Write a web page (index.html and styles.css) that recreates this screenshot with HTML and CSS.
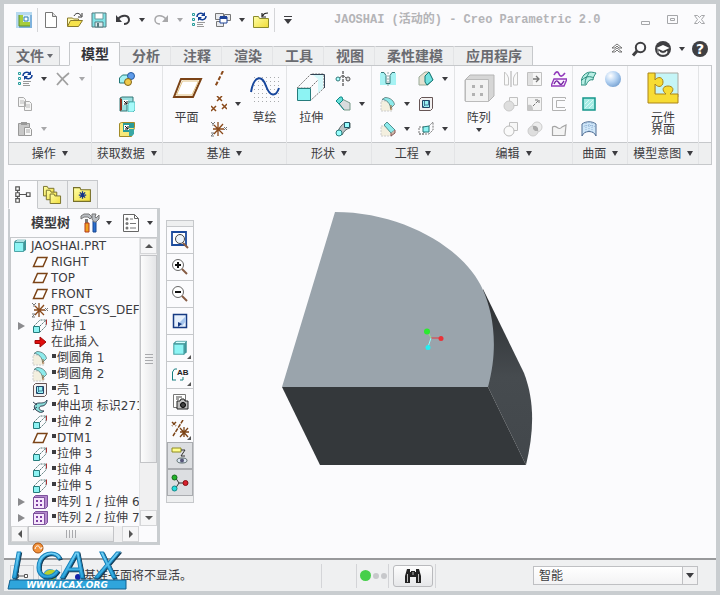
FILE: index.html
```html
<!DOCTYPE html>
<html lang="zh-CN">
<head>
<meta charset="utf-8">
<title>JAOSHAI (活动的) - Creo Parametric 2.0</title>
<link rel="stylesheet" href="styles.css">
</head>
<body>
<svg class="defs" aria-hidden="true">
  <defs>
    <linearGradient id="g-yellow" x1="0" y1="0" x2="1" y2="1"><stop offset="0" stop-color="#ffffa8"/><stop offset="1" stop-color="#f0dc38"/></linearGradient>
    <linearGradient id="g-side" x1="0" y1="0" x2="0" y2="1"><stop offset="0" stop-color="#2b2e31"/><stop offset=".5" stop-color="#464b4f"/><stop offset="1" stop-color="#42474b"/></linearGradient>
    <radialGradient id="g-ball" cx=".35" cy=".3" r=".8"><stop offset="0" stop-color="#fff"/><stop offset=".5" stop-color="#b4d2f2"/><stop offset="1" stop-color="#6f9bcd"/></radialGradient>
    <linearGradient id="g-logo" x1="0" y1="0" x2="0" y2="1"><stop offset="0" stop-color="#8be0ff"/><stop offset="1" stop-color="#0f93d2"/></linearGradient>
    <pattern id="p-dots" width="4" height="4" patternUnits="userSpaceOnUse"><rect width="1" height="1" x="1" y="1" fill="#a9abad"/></pattern>
  </defs>
  <symbol id="i-app" viewBox="0 0 16 16"><rect width="16" height="16" fill="#7fb2dc"/><path d="M0 0h16v3H3v13H0z" fill="#b6d9ef"/><path d="M3 3h4v7h7v4H3z" fill="#a7cc3c"/><path d="M7 3h7v7H7z" fill="#d5ecf8"/><path d="M8 5h4v4H8z" fill="#fff" stroke="#2d7fb0"/><path d="M3 3v11h11" fill="none" stroke="#5d8e2b"/></symbol>
  <symbol id="i-new" viewBox="0 0 16 16"><path d="M2.500 .5h7l4 4v11h-11z" fill="#fff" stroke="#777"/><path d="M9.500 .5v4h4" fill="#ddd" stroke="#777"/></symbol>
  <symbol id="i-open" viewBox="0 0 16 16"><path d="M.5 14V6h5l1 1h5v2" fill="#fffcb0" stroke="#8a7a2c"/><path d="M.5 14.500l3-6h12l-4 6z" fill="#f6e24c" stroke="#8a7a2c"/><path d="M7 4c2-4 6-3 7 0m1-3v4h-4" fill="none" stroke="#333"/></symbol>
  <symbol id="i-save" viewBox="0 0 16 16"><path d="M1 1h14v14H1z" fill="#7fe3e6" stroke="#55797e"/><path d="M4 1h8v6H4z" fill="#fff" stroke="#6b9a9d"/><path d="M4 10h8v5H4z" fill="#dcecee" stroke="#55797e"/><path d="M6 11h2v4H6z" fill="#55797e"/></symbol>
  <symbol id="i-undo" viewBox="0 0 16 16"><path d="M3 7c4-5 11-4 11 1 0 3-3 4-5 4" fill="none" stroke="currentColor" stroke-width="2"/><path d="M1 3v7h6z" fill="currentColor"/></symbol>
  <symbol id="i-redo" viewBox="0 0 16 16"><path d="M13 7C9 2 2 3 2 8c0 3 3 4 5 4" fill="none" stroke="currentColor" stroke-width="1.500"/><path d="M15 3v7H9z" fill="currentColor"/></symbol>
  <symbol id="i-regen" viewBox="0 0 16 16"><path d="M1.500 1.500h2v2h-2zM1.500 6.500h2v2h-2zM1.500 11.500h2v2h-2z" fill="#dff" stroke="#2b9b9b"/><path d="M6 10.500h8M6 12.500h6M6 14.500h7" stroke="#999"/><path d="M6 5c0-4 5-5 7-2M15 4c0 4-5 5-7 2" fill="none" stroke="#123f96" stroke-width="1.500"/><path d="M14 0v4h-4zM7 9V5h4z" fill="#123f96"/></symbol>
  <symbol id="i-win" viewBox="0 0 16 16"><path d="M.5 1.500h8v6h-8zM9.500 2.500h6v6h-6zM1.500 9.500h7v5h-7z" fill="#e8eaee" stroke="#777"/><path d="M5 5h7v6H5z" fill="#fff" stroke="#1d4298"/><path d="M5 4h7v3H5z" fill="#1d4298"/></symbol>
  <symbol id="i-close" viewBox="0 0 16 16"><path d="M.5 4.500h5l1 2h9v9H.5z" fill="url(#g-yellow)" stroke="#8a8a2c"/><path d="M10 4c0-2 2-3 5-3M9 1v4h4" fill="none" stroke="#222" stroke-width="1.200"/></symbol>
  <symbol id="i-x" viewBox="0 0 16 16"><path d="M2 2l11 12M14 2C10 5 6 9 2 14" fill="none" stroke="#a0a0a0" stroke-width="1.800"/></symbol>
  <symbol id="i-copy" viewBox="0 0 16 16"><path d="M1.500 1.500h5l2 2v7h-7zM7.500 5.500h5l2 2v7h-7z" fill="#f5f5f5" stroke="#aaa"/><path d="M3 5h4M3 7h4M9 9h4M9 11h4" stroke="#bbb"/></symbol>
  <symbol id="i-paste" viewBox="0 0 16 16"><path d="M1.500 2.500h11v12h-11z" fill="#c8c8c8" stroke="#999"/><path d="M4 1h6v3H4z" fill="#999"/><path d="M7.500 6.500h5l2 2v6h-7z" fill="#f8f8f8" stroke="#999"/><path d="M9 9h4M9 11h4" stroke="#aaa"/></symbol>
  <symbol id="i-udf" viewBox="0 0 16 16"><path d="M.5 7l3-3h6v5l-3 3h-6z" fill="#a4f2f4" stroke="#277"/><circle cx="12" cy="5" r="3.500" fill="#5d9bea" stroke="#285a9e"/><circle cx="9" cy="11" r="3.500" fill="#f0c94a" stroke="#81651c"/></symbol>
  <symbol id="i-copygeo" viewBox="0 0 16 16"><path d="M1 2l2-1h11v5H8v9H1z" fill="#9adfe0" stroke="#377"/><path d="M1 2v13l2-1V3z" fill="#8b2e1c"/><path d="M4 4h5v5H4z" fill="#fff"/><path d="M5 5l3 3m0-3v3H5" stroke="#111" fill="none"/><path d="M9 8l2-2h5v8l-2 2H9z" fill="#a6fafa" stroke="#5bb"/></symbol>
  <symbol id="i-shrink" viewBox="0 0 16 16"><path d="M.5 2.500l2-1h13v5l-3 9H.5z" fill="#f7e97a" stroke="#a28b28"/><path d="M4 2h11v5h-5v4H4z" fill="#299a98"/><path d="M5 4h5v5H5z" fill="#fff"/><path d="M6 5l3 3m0-3v3H6" stroke="#111" fill="none"/><path d="M10 8h5v5l-2 2h-3z" fill="#3aa8a5"/></symbol>
  <symbol id="i-plane" viewBox="0 0 32 32"><path d="M10 7h20L22 25H3z" fill="#fff" stroke="#7b4316" stroke-width="2"/><path d="M11.500 9h16L21 23H5.500z" fill="none" stroke="#e0c080"/></symbol>
  <symbol id="i-splane" viewBox="0 0 16 16"><path d="M5.500 3.500H15l-4 9H1.500z" fill="#fff" stroke="#7b4316" stroke-width="1.500"/></symbol>
  <symbol id="i-axis" viewBox="0 0 16 16"><path d="M12 0L4 16" stroke="#8a4a1b" stroke-width="2" stroke-dasharray="4 2"/></symbol>
  <symbol id="i-points" viewBox="0 0 16 16"><path d="M6 0l5 5m0-5L6 5M0 10l5 5m0-5l-5 5M11 8l5 5m0-5l-5 5" stroke="#8a4a1b" stroke-width="1.500"/></symbol>
  <symbol id="i-csys" viewBox="0 0 16 16"><path d="M2 8h11M7 1v14M3 4l9 9M12 3l-9 10" stroke="#8a4a1b" stroke-width="1.300"/><path d="M0 1l2 2 2-2M2 3v2M0 12h3l-3 3h3M13 6l3 3m0-3l-3 3" fill="none" stroke="#777"/></symbol>
  <symbol id="i-sketch" viewBox="0 0 32 32"><rect x="2" y="2" width="28" height="28" fill="url(#p-dots)"/><path d="M2 20C5 3 13 3 17 14s10 11 13 2" fill="none" stroke="#17469c" stroke-width="2"/></symbol>
  <symbol id="i-extrude" viewBox="0 0 32 32"><path d="M2 16L16 2h13L15 16zM15 29l14-13V3" fill="none" stroke="#777" stroke-dasharray="2 1"/><path d="M18 3h10v13l-5 5V7z" fill="#d4f8fa"/><path d="M16 2.500h13.500V16" fill="none" stroke="#345"/><path d="M2.500 16.500h13v12h-13z" fill="#8df3f3" stroke="#267c7c"/></symbol>
  <symbol id="i-sextrude" viewBox="0 0 16 16"><path d="M2 8l6-6h6L8 8M8 14l6-6V2" fill="none" stroke="#577" stroke-dasharray="2 1"/><path d="M14.500 1.500v5" stroke="#a33"/><path d="M1.500 8.500h6v6h-6z" fill="#8df3f3" stroke="#267c7c"/></symbol>
  <symbol id="i-revolve" viewBox="0 0 16 16"><path d="M8 0v16" stroke="#222" stroke-dasharray="3 1"/><circle cx="3" cy="8" r="2" fill="#aff" stroke="#377"/><circle cx="13" cy="8" r="2" fill="#ddd" stroke="#555"/><path d="M5 7c1-3 4-3 6 0" fill="none" stroke="#555"/></symbol>
  <symbol id="i-blend" viewBox="0 0 16 16"><path d="M4 7l3-4 8 4v7H9z" fill="#d9dcdd" stroke="#798"/><path d="M1 5l4-4h2l1 3-4 4z" fill="#66e0d8" stroke="#188"/><path d="M4 8l5 6" stroke="#188"/></symbol>
  <symbol id="i-sweep" viewBox="0 0 16 16"><path d="M3 10C6 4 8 3 10 2h5v5c-4 1-6 3-8 7z" fill="#bcc3c5" stroke="#566"/><path d="M9.500 1.500h5v5h-5z" fill="#9ff" stroke="#256"/><circle cx="4" cy="12" r="3" fill="#9ff" stroke="#297b7b"/></symbol>
  <symbol id="i-hole" viewBox="0 0 16 16"><path d="M0 2h4l2 3v8h4V5l2-3h4v12H0z" fill="#a6f2f3"/><path d="M1 1.500h3l2 3v8h4v-8l2-3h3" fill="none" stroke="#377"/><path d="M8 1v14" stroke="#9aa" stroke-dasharray="2 1"/></symbol>
  <symbol id="i-round" viewBox="0 0 16 16"><path d="M1 5h6l5 5v5H1z" fill="#f3efdf" stroke="#ccc" stroke-dasharray="2 1"/><path d="M2 3.500L5 1.500c6 0 9 4 9.500 7l-4 4c0-5-4-9-8.500-9z" fill="#8debec" stroke="#577" stroke-width=".8"/><path d="M11 14V9" stroke="#a63"/></symbol>
  <symbol id="i-chamfer" viewBox="0 0 16 16"><path d="M1 5h6l5 5v5H1z" fill="#f3efdf" stroke="#ccc" stroke-dasharray="2 1"/><path d="M4 4l3-3 8 8-4 3z" fill="#8debec" stroke="#377" stroke-width=".8"/><path d="M11 12v3l4-3V9" fill="#cba" stroke="#855"/></symbol>
  <symbol id="i-draft" viewBox="0 0 16 16"><path d="M1 6l6-5h4l4 8-5 5H1z" fill="#e5e1d0" stroke="#9a9"/><path d="M7 5l4-4 4 8-6 5-2-3z" fill="#72e2e0" stroke="#177"/></symbol>
  <symbol id="i-shell" viewBox="0 0 16 16"><path d="M1.500 3.500l2-2h11v11l-2 2h-11z" fill="#f3f1f1" stroke="#655"/><path d="M4.500 4.500h7v7h-7z" fill="#9af4f4" stroke="#246"/><path d="M6.500 5v4h4V5M5 11l2-2" fill="none" stroke="#479"/></symbol>
  <symbol id="i-rib" viewBox="0 0 16 16"><path d="M1 6h5v7H1zM1 13h10l4-4V1l-4 4" fill="none" stroke="#777" stroke-dasharray="2 1"/><path d="M5 6l6-1v6H5z" fill="#8df3f3" stroke="#277"/></symbol>
  <symbol id="i-pattern" viewBox="0 0 32 32"><path d="M2 8l5-5h24v21l-5 5H2z" fill="#d6d6d6" stroke="#b5b5b5"/><path d="M2.500 7.500h23v22h-23z" fill="#f2f2f2" stroke="#bbb"/><path d="M9 13h3v3H9zM17 13h3v3h-3zM9 21h3v3H9zM17 21h3v3h-3z" fill="#b2b2b2"/></symbol>
  <symbol id="i-mirror" viewBox="0 0 16 16"><path d="M8 0v16" stroke="#aaa"/><path d="M1.500 1v13h4V7c-1-3-2-4-4-6zM14.500 1v13h-4V7c1-3 2-4 4-6z" fill="#fafafa" stroke="#c4c4c4"/></symbol>
  <symbol id="i-extend" viewBox="0 0 16 16"><path d="M.5 1.500h14v13H.5z" fill="#f7f7f7" stroke="#c0c0c0"/><path d="M1 2h5v12H1z" fill="#e0e0e0"/><path d="M6 8h6M9 5l3 3-3 3" fill="none" stroke="#777" stroke-width="1.300"/></symbol>
  <symbol id="i-project" viewBox="0 0 16 16"><path d="M3 4c2-4 4-4 5-1s3 3 6-1" fill="none" stroke="#923abb" stroke-width="1.600"/><path d="M3 8h13l-3 7H0z" fill="#faf0ff" stroke="#923abb" stroke-width="1.400"/><path d="M3 13c2-4 3-4 5-1s3 1 5-2" fill="none" stroke="#7223a0" stroke-width="1.400"/></symbol>
  <symbol id="i-merge" viewBox="0 0 16 16"><path d="M6.500 1.500h8v8h-8z" fill="#f7f7f7" stroke="#c0c0c0"/><circle cx="6" cy="10" r="5" fill="#dedede" stroke="#c8c8c8"/></symbol>
  <symbol id="i-intersect" viewBox="0 0 16 16"><path d="M6.500 1.500h8v8h-8z" fill="#f7f7f7" stroke="#c0c0c0"/><circle cx="6" cy="10" r="5" fill="#fafafa" stroke="#bbb"/></symbol>
  <symbol id="i-trim" viewBox="0 0 16 16"><path d="M.5 1.500h14v13H.5z" fill="#f3f3f3" stroke="#c4c4c4"/><path d="M1 9c4-1 5 2 5 5H1z" fill="#c6c6c6"/><path d="M6 10l6-6M8 4h4v4" fill="none" stroke="#777" stroke-dasharray="3 1"/></symbol>
  <symbol id="i-offset" viewBox="0 0 16 16"><path d="M14.500 3V1.500h-13v13h13V13M14 4.500H5.500v7H14" fill="none" stroke="#b2b2b2"/></symbol>
  <symbol id="i-solidify" viewBox="0 0 16 16"><circle cx="10" cy="6" r="5" fill="#ececec" stroke="#ccc"/><circle cx="6" cy="10" r="5" fill="#dedede" stroke="#ccc"/><path d="M6 5h3l2 2v3H8L6 8z" fill="#aaa"/></symbol>
  <symbol id="i-fillc" viewBox="0 0 16 16"><path d="M1.500 14.500V6C6 3 7 11 11 6l4-2-1 10.500z" fill="#f4f4f4" stroke="#a5a5a5" stroke-width="1.200"/></symbol>
  <symbol id="i-bound" viewBox="0 0 16 16"><path d="M3 4c4-4 8-3 12-2-2 3-3 5-3 7-3-1-5 1-7 5H0c0-5 1-8 3-10z" fill="#b9efe5" stroke="#2a8c7d"/><path d="M1 9c4-4 8-4 12-2M8 2c-2 3-4 6-4 11" fill="none" stroke="#2a8c7d"/></symbol>
  <symbol id="i-fill" viewBox="0 0 16 16"><path d="M2 2h12v12H2z" fill="#a5ece4" stroke="#16978b" stroke-width="1.500"/><path d="M4 8l4-4M4 12l8-8M8 12l4-4" stroke="#d9faf6"/></symbol>
  <symbol id="i-style" viewBox="0 0 16 16"><path d="M1 3c4-3 10-3 14 0v12c-2-6-12-6-14 0z" fill="#cfe6f8" stroke="#4f6d93"/><path d="M5 2v9M8 1v9M11 2v9M1 6c4-2 10-2 14 0" fill="none" stroke="#8fb0d4" stroke-dasharray="1 1"/></symbol>
  <symbol id="i-ball" viewBox="0 0 16 16"><circle cx="8" cy="8" r="8" fill="url(#g-ball)"/></symbol>
  <symbol id="i-comp" viewBox="0 0 32 32"><path d="M8 1h23v24H8z" fill="#c5f5f7" stroke="#a9a9a0"/><path d="M1 1h7v7c3-4 8-3 8 2s-5 6-8 2v10h11c-5-4-3-8 2-8s7 4 2 8h8v9H1z" fill="#f7dc34" stroke="#ab8418"/></symbol>
  <symbol id="i-tree" viewBox="0 0 16 16"><path d="M1.500 1.500h3v3h-3zM1.500 6.500h3v3h-3zM1.500 11.500h3v3h-3zM10.500 6.500h3v3h-3zM3 5v1M3 10v1M5 8h5" fill="#fff" stroke="#555"/></symbol>
  <symbol id="i-folders" viewBox="0 0 20 20"><g fill="url(#g-yellow)" stroke="#77702a"><path d="M.5 1.500h4l1 2h6v8H.5z"/><path d="M3.500 5.500h4l1 2h6v8h-11z"/><path d="M7.500 9.500h4l1 2h6v8h-11z"/></g></symbol>
  <symbol id="i-fav" viewBox="0 0 18 16"><path d="M.5 1.500h6l1 2h9v11H.5z" fill="url(#g-yellow)" stroke="#77702a"/><path d="M9 5v7M5.500 8.500h7M6.500 6l5 5m0-5l-5 5" stroke="#14348a" stroke-width="1.200"/></symbol>
  <symbol id="i-tools" viewBox="0 0 20 20"><path d="M5 6h3v4H5z" fill="#777"/><path d="M5 10h4v9H5z" fill="#f0a020" stroke="#b33a1a"/><path d="M1 3l3-2h5l3 3-2 2-2-2H4L1 6z" fill="#b9bdc2" stroke="#777"/><path d="M13 8h3v11h-3z" fill="#286fd0" stroke="#184690"/><path d="M12 1v5l2 3h2l3-3V2l-3 3-1-1 1-3z" fill="#b9bdc2" stroke="#777"/></symbol>
  <symbol id="i-list" viewBox="0 0 18 20"><path d="M1.500 1.500h11l4 4v13h-15z" fill="#fff" stroke="#666"/><path d="M12.500 1.500v4h4" fill="none" stroke="#666"/><circle cx="5" cy="6" r="1.500" fill="#777"/><circle cx="5" cy="10.500" r="1.500" fill="#777"/><circle cx="5" cy="15" r="1.500" fill="#777"/><path d="M8 6h3M8 10.500h6M8 15h6" stroke="#777"/></symbol>
  <symbol id="i-part" viewBox="0 0 16 16"><path d="M2 4l2-2h10v10l-3 2z" fill="#3f9699"/><path d="M2.500 4.500h9v9h-9z" fill="#8df4f4" stroke="#4fa5a8"/><path d="M3 4l2-2h9l-2 2z" fill="#d7ffff" stroke="#2c8285" stroke-width=".5"/></symbol>
  <symbol id="i-insert" viewBox="0 0 16 16"><path d="M3 6.500h5V3l6 5-6 5V9.500H3z" fill="#e00d0d" stroke="#a00808"/></symbol>
  <symbol id="i-protr" viewBox="0 0 16 16"><path d="M15 2c-2 3-4 3-8 3-5 0-6 5-3 7l3 2c2 1 4 0 5-1-6 0-6-5-2-5 3 0 5-3 5-6z" fill="#8adedb" stroke="#345"/><path d="M1 4l4 3M1 12l4-3" stroke="#345"/></symbol>
  <symbol id="i-spat" viewBox="0 0 16 16"><path d="M1.500 3.500l2-2h12v11l-2 2h-12z" fill="#b488cc" stroke="#7d529c"/><path d="M1.500 3.500h11v11h-11z" fill="#f6e6fc" stroke="#7d529c"/><path d="M4 6h2v2H4zM8 6h2v2H8zM4 10h2v2H4zM8 10h2v2H8z" fill="#7e3fa3"/></symbol>
  <symbol id="i-refit" viewBox="0 0 18 18"><path d="M1 1h14v13H1z" fill="#fff" stroke="#1b4a9c" stroke-width="1.800"/><circle cx="9" cy="8" r="4.500" fill="#edf4fa" stroke="#444"/><path d="M12 12l5 5" stroke="#865b43" stroke-width="2"/></symbol>
  <symbol id="i-zin" viewBox="0 0 18 18"><circle cx="7" cy="7" r="5.500" fill="#fff" stroke="#666"/><path d="M4 7h6M7 4v6" stroke="#111" stroke-width="2"/><path d="M11 11l5 5" stroke="#865b43" stroke-width="2"/></symbol>
  <symbol id="i-zout" viewBox="0 0 18 18"><circle cx="7" cy="7" r="5.500" fill="#fff" stroke="#666"/><path d="M4 7h6" stroke="#111" stroke-width="2"/><path d="M11 11l5 5" stroke="#865b43" stroke-width="2"/></symbol>
  <symbol id="i-repaint" viewBox="0 0 18 18"><path d="M2.500 2.500h13v13h-13z" fill="#e6f0fc" stroke="#173b83" stroke-width="1.500"/><path d="M15 4L8 11l3 3 4-5z" fill="#a5c4ec"/><path d="M7 10v5l4-3z" fill="#173b83"/></symbol>
  <symbol id="i-camera" viewBox="0 0 18 18"><path d="M2.500 1.500h12v13h-12z" fill="#fff" stroke="#777"/><path d="M5 4h6M5 6h3" stroke="#444"/><path d="M6 8h3l1-2h3l1 2h3v8H6z" fill="#bdbdbd" stroke="#222"/><circle cx="12" cy="12" r="2.500" fill="#444" stroke="#000"/></symbol>
  <symbol id="i-datum" viewBox="0 0 18 18"><path d="M1 2l4 4m0-4L1 6M12 0L2 16" stroke="#7b4316" stroke-width="1.500" stroke-dasharray="4 1"/><path d="M9 12h9M13 7v10M9 8l8 9M17 8l-8 9" stroke="#7b4316" stroke-width="1.300"/></symbol>
  <symbol id="i-annot" viewBox="0 0 18 18"><path d="M1 1h9v4H1z" fill="#fffd8e" stroke="#8e8b20"/><path d="M10 3h4l-4 6h4" fill="none" stroke="#333"/><ellipse cx="11" cy="13.500" rx="5" ry="2.500" fill="#dce6f2" stroke="#566"/><circle cx="11" cy="13.500" r="2" fill="#557"/></symbol>
  <symbol id="i-spin" viewBox="0 0 18 18"><path d="M4 3l4 6h7M8 9l-4 6" fill="none" stroke="#333"/><circle cx="3.500" cy="3.500" r="2.500" fill="#23b32b" stroke="#156b1b"/><circle cx="14.500" cy="9" r="2.500" fill="#d8202e" stroke="#811"/><circle cx="3.500" cy="14.500" r="2.500" fill="#26dede" stroke="#188"/></symbol>
  <symbol id="i-binoc" viewBox="0 0 18 16"><path d="M3 1h3v3h1V3h4v1h1V1h3l2 7v7h-5V9H6v6H1V8z" fill="#222"/><path d="M3.500 6v8M14.500 6v8M9 4v3" stroke="#bbb" fill="none"/></symbol>
</svg>

<header class="titlebar">
  <nav class="quick" aria-label="快速访问">
    <button class="ib" aria-label="Creo"><svg class="ic"><use href="#i-app"/></svg></button>
    <span class="vsep"></span>
    <button class="ib" aria-label="新建"><svg class="ic"><use href="#i-new"/></svg></button>
    <button class="ib" aria-label="打开"><svg class="ic"><use href="#i-open"/></svg></button>
    <button class="ib" aria-label="保存"><svg class="ic"><use href="#i-save"/></svg></button>
    <button class="ib" aria-label="撤消"><svg class="ic"><use href="#i-undo"/></svg></button>
    <button class="cb" aria-label="撤消列表"><i class="caret"></i></button>
    <button class="ib dim" aria-label="重做"><svg class="ic"><use href="#i-redo"/></svg></button>
    <button class="cb dim" aria-label="重做列表"><i class="caret"></i></button>
    <button class="ib" aria-label="重新生成"><svg class="ic"><use href="#i-regen"/></svg></button>
    <button class="ib" aria-label="窗口"><svg class="ic"><use href="#i-win"/></svg></button>
    <button class="cb" aria-label="窗口列表"><i class="caret"></i></button>
    <button class="ib" aria-label="关闭"><svg class="ic"><use href="#i-close"/></svg></button>
    <span class="vsep"></span>
    <button class="cb more" aria-label="自定义"><i class="caret"></i></button>
  </nav>
  <h1 class="title">JAOSHAI (活动的) - Creo Parametric 2.0</h1>
  <div class="wincontrols">
    <button class="wb" aria-label="最小化"><svg viewBox="0 0 12 12"><path d="M1.500 7.500h8v3h-8z"/></svg></button>
    <button class="wb" aria-label="最大化"><svg viewBox="0 0 12 12"><path d="M.5 1.500h10v8H.5zM3.500 4.500h4v2h-4z"/></svg></button>
    <button class="wb" aria-label="关闭窗口"><svg viewBox="0 0 12 12"><path d="M.5 1.500h3l2 2 2-2h3l-3 4 3 4h-3l-2-2-2 2h-3l3-4z"/></svg></button>
  </div>
</header>

<div class="tabrow">
  <button class="tab file">文件<i class="caret"></i></button>
  <nav class="tabs" aria-label="功能区">
    <button class="tab active">模型</button>
    <button class="tab">分析</button>
    <button class="tab">注释</button>
    <button class="tab">渲染</button>
    <button class="tab">工具</button>
    <button class="tab">视图</button>
    <button class="tab">柔性建模</button>
    <button class="tab">应用程序</button>
  </nav>
  <div class="help">
    <button class="hb" aria-label="折叠功能区"><svg class="ic" viewBox="0 0 16 16"><path d="M3 7l5-4 5 4H10L8 5 6 7zM3 11l5-4 5 4H10L8 9l-2 2z" fill="#fff" stroke="#555" stroke-width=".8"/></svg></button>
    <button class="hb" aria-label="搜索"><svg class="ic" viewBox="0 0 16 16"><circle cx="9.500" cy="6.500" r="4.700" fill="none" stroke="#3f3f42" stroke-width="2"/><path d="M6 10l-4 4.500" stroke="#3f3f42" stroke-width="3"/></svg></button>
    <button class="hb" aria-label="学习"><svg class="ic" viewBox="0 0 16 16"><circle cx="8" cy="8" r="8" fill="#3f3f42"/><path d="M1.500 7L8 4l6.500 3L8 10z" fill="#fff"/><path d="M4 10c2 3 6 3 8 0v2c-2 2-6 2-8 0zM3 7.500V12" fill="#fff" stroke="#fff" stroke-width=".6"/></svg></button>
    <button class="cb" aria-label="学习列表"><i class="caret"></i></button>
    <button class="hb round" aria-label="帮助">?</button>
  </div>
</div>

<section class="ribbon">
  <div class="group">
    <div class="tools g2">
      <button class="ib" aria-label="重新生成"><svg class="ic"><use href="#i-regen"/></svg></button><button class="cb" aria-label="更多"><i class="caret"></i></button><button class="ib" aria-label="删除"><svg class="ic"><use href="#i-x"/></svg></button><button class="cb dim" aria-label="更多"><i class="caret"></i></button>
      <button class="ib c1" aria-label="复制"><svg class="ic"><use href="#i-copy"/></svg></button>
      <button class="ib c1" aria-label="粘贴"><svg class="ic"><use href="#i-paste"/></svg></button><button class="cb dim" aria-label="更多"><i class="caret"></i></button>
    </div>
    <button class="glabel">操作<i class="caret"></i></button>
  </div>
  <div class="group">
    <div class="tools mid">
      <div class="stack">
        <button class="ib" aria-label="用户定义特征"><svg class="ic"><use href="#i-udf"/></svg></button>
        <button class="ib" aria-label="复制几何"><svg class="ic"><use href="#i-copygeo"/></svg></button>
        <button class="ib" aria-label="收缩包络"><svg class="ic"><use href="#i-shrink"/></svg></button>
      </div>
    </div>
    <button class="glabel">获取数据<i class="caret"></i></button>
  </div>
  <div class="group">
    <div class="tools">
      <button class="big"><svg class="bi"><use href="#i-plane"/></svg>平面</button>
      <div class="stack">
        <button class="ib" aria-label="轴"><svg class="ic"><use href="#i-axis"/></svg></button>
        <button class="ib" aria-label="点"><svg class="ic"><use href="#i-points"/></svg></button>
        <button class="ib" aria-label="坐标系"><svg class="ic"><use href="#i-csys"/></svg></button>
      </div>
      <button class="cb" aria-label="更多点"><i class="caret"></i></button>
      <button class="big"><svg class="bi"><use href="#i-sketch"/></svg>草绘</button>
    </div>
    <button class="glabel">基准<i class="caret"></i></button>
  </div>
  <div class="group">
    <div class="tools">
      <button class="big"><svg class="bi"><use href="#i-extrude"/></svg>拉伸</button>
      <div class="stack">
        <button class="ib" aria-label="旋转"><svg class="ic"><use href="#i-revolve"/></svg></button>
        <button class="ib" aria-label="扫描混合"><svg class="ic"><use href="#i-blend"/></svg></button>
        <button class="ib" aria-label="扫描"><svg class="ic"><use href="#i-sweep"/></svg></button>
      </div>
      <button class="cb" aria-label="更多形状"><i class="caret"></i></button>
    </div>
    <button class="glabel">形状<i class="caret"></i></button>
  </div>
  <div class="group">
    <div class="tools g2">
      <button class="ib" aria-label="孔"><svg class="ic"><use href="#i-hole"/></svg></button><button class="ib c3" aria-label="拔模"><svg class="ic"><use href="#i-draft"/></svg></button><button class="cb" aria-label="更多"><i class="caret"></i></button>
      <button class="ib" aria-label="倒圆角"><svg class="ic"><use href="#i-round"/></svg></button><button class="cb" aria-label="更多"><i class="caret"></i></button><button class="ib" aria-label="壳"><svg class="ic"><use href="#i-shell"/></svg></button>
      <button class="ib c1" aria-label="倒角"><svg class="ic"><use href="#i-chamfer"/></svg></button><button class="cb" aria-label="更多"><i class="caret"></i></button><button class="ib" aria-label="筋"><svg class="ic"><use href="#i-rib"/></svg></button><button class="cb" aria-label="更多"><i class="caret"></i></button>
    </div>
    <button class="glabel">工程<i class="caret"></i></button>
  </div>
  <div class="group">
    <div class="tools">
      <button class="big"><svg class="bi"><use href="#i-pattern"/></svg>阵列<i class="caret"></i></button>
      <div class="g3">
        <button class="ib" aria-label="镜像"><svg class="ic"><use href="#i-mirror"/></svg></button>
        <button class="ib" aria-label="延伸"><svg class="ic"><use href="#i-extend"/></svg></button>
        <button class="ib" aria-label="投影"><svg class="ic"><use href="#i-project"/></svg></button>
        <button class="ib" aria-label="合并"><svg class="ic"><use href="#i-merge"/></svg></button>
        <button class="ib" aria-label="修剪"><svg class="ic"><use href="#i-trim"/></svg></button>
        <button class="ib" aria-label="偏移"><svg class="ic"><use href="#i-offset"/></svg></button>
        <button class="ib" aria-label="相交"><svg class="ic"><use href="#i-intersect"/></svg></button>
        <button class="ib" aria-label="实体化"><svg class="ic"><use href="#i-solidify"/></svg></button>
        <button class="ib" aria-label="包络"><svg class="ic"><use href="#i-fillc"/></svg></button>
      </div>
    </div>
    <button class="glabel">编辑<i class="caret"></i></button>
  </div>
  <div class="group">
    <div class="tools">
      <div class="stack">
        <button class="ib" aria-label="边界混合"><svg class="ic"><use href="#i-bound"/></svg></button>
        <button class="ib" aria-label="填充"><svg class="ic"><use href="#i-fill"/></svg></button>
        <button class="ib" aria-label="样式"><svg class="ic"><use href="#i-style"/></svg></button>
      </div>
      <div class="stack"><button class="ib" aria-label="自由式"><svg class="ic"><use href="#i-ball"/></svg></button></div>
    </div>
    <button class="glabel">曲面<i class="caret"></i></button>
  </div>
  <div class="group">
    <div class="tools mid"><button class="big"><svg class="bi"><use href="#i-comp"/></svg><span>元件<br>界面</span></button></div>
    <button class="glabel">模型意图<i class="caret"></i></button>
  </div>
  <div class="group rest"><div class="tools"></div><div class="glabel"></div></div>
</section>

<main class="work">
  <aside class="side">
    <div class="sidetabs">
      <button class="stab on" aria-label="模型树"><svg class="mi"><use href="#i-tree"/></svg></button>
      <button class="stab" aria-label="文件夹浏览器"><svg class="mi"><use href="#i-folders"/></svg></button>
      <button class="stab" aria-label="收藏夹"><svg class="mi"><use href="#i-fav"/></svg></button>
    </div>
    <div class="panel">
      <div class="phead">
        <h2>模型树</h2>
        <button class="pb" aria-label="设置"><svg class="pi"><use href="#i-tools"/></svg></button><button class="cb" aria-label="设置列表"><i class="caret"></i></button>
        <button class="pb" aria-label="显示"><svg class="pi"><use href="#i-list"/></svg></button><button class="cb" aria-label="显示列表"><i class="caret"></i></button>
      </div>
      <div class="treebox">
        <ul class="tree">
          <li class="root"><svg class="ti"><use href="#i-part"/></svg>JAOSHAI.PRT</li>
          <li><svg class="ti"><use href="#i-splane"/></svg>RIGHT</li>
          <li><svg class="ti"><use href="#i-splane"/></svg>TOP</li>
          <li><svg class="ti"><use href="#i-splane"/></svg>FRONT</li>
          <li><svg class="ti"><use href="#i-csys"/></svg>PRT_CSYS_DEF</li>
          <li class="sub"><svg class="ti"><use href="#i-sextrude"/></svg>拉伸 1</li>
          <li><svg class="ti"><use href="#i-insert"/></svg>在此插入</li>
          <li class="mk"><svg class="ti"><use href="#i-round"/></svg>倒圆角 1</li>
          <li class="mk"><svg class="ti"><use href="#i-round"/></svg>倒圆角 2</li>
          <li class="mk"><svg class="ti"><use href="#i-shell"/></svg>壳 1</li>
          <li class="mk"><svg class="ti"><use href="#i-protr"/></svg>伸出项 标识271</li>
          <li class="mk"><svg class="ti"><use href="#i-sextrude"/></svg>拉伸 2</li>
          <li class="mk"><svg class="ti"><use href="#i-splane"/></svg>DTM1</li>
          <li class="mk"><svg class="ti"><use href="#i-sextrude"/></svg>拉伸 3</li>
          <li class="mk"><svg class="ti"><use href="#i-sextrude"/></svg>拉伸 4</li>
          <li class="mk"><svg class="ti"><use href="#i-sextrude"/></svg>拉伸 5</li>
          <li class="mk sub"><svg class="ti"><use href="#i-spat"/></svg>阵列 1 / 拉伸 6</li>
          <li class="mk sub"><svg class="ti"><use href="#i-spat"/></svg>阵列 2 / 拉伸 7</li>
        </ul>
        <div class="vscroll">
          <button class="sb" aria-label="向上"><i class="caret up"></i></button>
          <div class="vthumb"><i class="grip"></i></div>
          <span class="gap"></span>
          <button class="sb" aria-label="向下"><i class="caret down"></i></button>
        </div>
        <div class="hscroll">
          <button class="sb" aria-label="向左"><i class="caret left"></i></button>
          <div class="hthumb"><i class="grip"></i></div>
          <span class="gap"></span>
          <button class="sb" aria-label="向右"><i class="caret right"></i></button>
        </div>
        <div class="corner"></div>
      </div>
    </div>
  </aside>

  <div class="viewbar" role="toolbar" aria-label="视图">
    <button class="vb" aria-label="重新调整"><svg class="vi"><use href="#i-refit"/></svg></button>
    <button class="vb" aria-label="放大"><svg class="vi"><use href="#i-zin"/></svg></button>
    <button class="vb" aria-label="缩小"><svg class="vi"><use href="#i-zout"/></svg></button>
    <button class="vb" aria-label="重画"><svg class="vi"><use href="#i-repaint"/></svg></button>
    <button class="vb fly" aria-label="显示样式"><svg class="vi"><use href="#i-part"/></svg></button>
    <button class="vb fly" aria-label="已保存方向"><svg class="vi" viewBox="0 0 18 18"><path d="M1.500 14V6l2-3H6M1 14h4M12 11v3H9" fill="none" stroke="#167f80"/><text x="6" y="9" class="ab">AB</text></svg></button>
    <button class="vb" aria-label="视图管理器"><svg class="vi"><use href="#i-camera"/></svg></button>
    <button class="vb fly" aria-label="基准显示"><svg class="vi"><use href="#i-datum"/></svg></button>
    <button class="vb on" aria-label="注释显示"><svg class="vi"><use href="#i-annot"/></svg></button>
    <button class="vb on" aria-label="旋转中心"><svg class="vi"><use href="#i-spin"/></svg></button>
  </div>

  <div class="viewport">
    <svg class="model" viewBox="280 210 254 257" role="img" aria-label="JAOSHAI">
      <path d="M483 289L524 373C535 402 534 432 526 465L488 387z" fill="url(#g-side)"/>
      <path d="M282 387H488L526 465H320z" fill="#34383b"/>
      <path d="M335 212C405 212 466 250 483 290C493 312 499 347 488 387H282z" fill="#9aa4ac"/>
      <path d="M431 338h10" stroke="#e33b43"/><path d="M431 338l-3-6" stroke="#9be08b"/><path d="M431 338l-3 9" stroke="#8ff"/>
      <circle cx="441" cy="338.500" r="2.500" fill="#ea3238"/><circle cx="427" cy="331.500" r="3" fill="#2bea2f"/><circle cx="428" cy="347.500" r="2.500" fill="#22eff2"/>
    </svg>
  </div>
</main>

<footer class="status">
  <div class="toggles">
    <button class="tg" aria-label="导航器"><svg class="ic"><use href="#i-tree"/></svg></button>
    <button class="tg" aria-label="浏览器"><svg class="ic" viewBox="0 0 16 16"><circle cx="8" cy="8" r="7" fill="#3c9dd8"/><path d="M2 6c3-5 8-5 12-3l-3 4 3 3-5 4-3-4z" fill="#b8cf2f"/></svg></button>
  </div>
  <p class="msg">基准平面将不显活。</p>
  <span class="vsep push"></span>
  <div class="lights"><i class="ok"></i><i></i><i></i></div>
  <button class="find" aria-label="查找"><svg viewBox="0 0 18 16"><use href="#i-binoc"/></svg></button>
  <span class="vsep after"></span>
  <div class="filter">
    <select aria-label="过滤器"><option>智能</option></select><i class="caret"></i>
  </div>
  <svg class="brand" viewBox="0 0 120 48" role="img" aria-label="ICAX">
    <text class="word" x="4 28 55 88" y="36">ICAX</text>
    <circle cx="31" cy="6" r="5" fill="#f2913a" stroke="#a7500d"/><path d="M28 7c1-4 4-4 5-1s2 0 2-1" fill="none" stroke="#fff"/>
    <path d="M3 38h116v9H1z" fill="#2fa5dc" stroke="#135f8c"/>
    <text class="url" x="60" y="46">WWW.ICAX.ORG</text>
  </svg>
</footer>
</body>
</html>
```
FILE: styles.css
```css
:root {
  --frame: #c9cdd0;
  --line: #c6c8cb;
  --soft: #e3e4e6;
  --paper: #fbfbfd;
  --bar: #eeeff0;
  --ink: #3c3c40;
}

* { box-sizing: border-box; }

body {
  margin: 0;
  min-height: 100vh;
  display: flex;
  flex-direction: column;
  border: 4px solid var(--frame);
  background: var(--paper);
  color: var(--ink);
  font: 12px/16px "DejaVu Sans", "Noto Sans CJK SC", sans-serif;
}

button {
  margin: 0;
  padding: 0;
  border: 0;
  background: none;
  color: inherit;
  font: inherit;
  display: flex;
  align-items: center;
  justify-content: center;
}

h1, h2, p, ul { margin: 0; padding: 0; list-style: none; }
svg { flex: none; display: block; }
.defs { position: absolute; width: 0; height: 0; }

.ic { width: 16px; height: 16px; }
.ib { width: 24px; height: 25px; flex: none; }
.cb { width: 14px; height: 24px; flex: none; }
.dim { color: #a8a8aa; }
.vsep { flex: none; width: 1px; height: 24px; margin: 0 1px; background: #d4d5d8; }

.caret {
  width: 0;
  height: 0;
  border: solid transparent;
  border-width: 4px 3px 0;
  border-top-color: currentColor;
}
.caret.down { border-width: 4px 4px 0; }
.caret.up { border-width: 0 4px 4px; border-color: transparent transparent currentColor; }
.caret.left { border-width: 4px 4px 4px 0; border-color: transparent currentColor transparent transparent; }
.caret.right { border-width: 4px 0 4px 4px; border-color: transparent transparent transparent currentColor; }

/* Title bar */
.titlebar { display: flex; align-items: center; height: 32px; margin-bottom: 6px; padding: 0 3px 0 8px; }
.quick { display: flex; align-items: center; }
.more { flex-direction: column; width: 24px; }
.more::before { content: ""; width: 8px; height: 1px; margin-bottom: 2px; background: currentColor; }
.more .caret { border-width: 5px 4px 0; }
.title { margin-left: 34px; white-space: nowrap; color: #b4b4b7; font: bold 12px/16px "Liberation Mono", "Noto Sans CJK SC", monospace; }
.wincontrols { display: flex; margin-left: auto; }
.wb { width: 27px; height: 24px; }
.wb svg { width: 12px; height: 12px; fill: none; stroke: #a5a6a9; }

/* Tabs */
.tabrow { display: flex; align-items: flex-end; padding: 0 4px; height: 24px; margin-bottom: -1px; }
.tab { height: 20px; padding: 0 10px 0 11px; border: 1px solid var(--line); border-left-color: transparent; border-right-color: var(--soft); background: var(--bar); color: #6a6b70; font-size: 14px; font-weight: bold; line-height: 18px; white-space: nowrap; }
.tab:last-child { border-right-color: var(--line); }
.tab.file { padding: 0 6px 0 7px; border-color: var(--line); margin-right: 9px; gap: 3px; }
.tabs { display: flex; align-items: flex-end; }
.tab.active { height: 24px; border-color: var(--line); border-bottom-color: var(--paper); background: var(--paper); color: #333338; position: relative; }
.help { display: flex; align-items: center; margin: 0 0 5px auto; height: 24px; }
.hb { width: 24px; height: 24px; }
.help .hb:first-child { width: 20px; }
.round { width: 16px; height: 16px; margin: 0 4px 0 3px; border-radius: 8px; background: #3f3f42; color: #fff; font-size: 14px; font-weight: bold; }

/* Ribbon */
.ribbon {
  display: grid;
  grid-template-columns: 83fr 71fr 125fr 85fr 83fr 119fr 55fr 71fr 12fr;
  margin: 0 4px;
  border: 1px solid var(--line);
}
.group { display: flex; flex-direction: column; border-right: 1px solid var(--soft); min-width: 0; }
.rest { border-right: 0; }
.tools { display: flex; align-items: center; height: 76px; padding-left: 4px; }
.tools.mid { justify-content: center; padding: 0; }
.tools.g2 { display: grid; grid-template-columns: 24px 14px 24px 14px; grid-auto-rows: 25px; align-content: center; }
.c1 { grid-column: 1; }
.c3 { grid-column: 3; }
.g3 { display: grid; grid-template-columns: repeat(3, 24px); }
.stack { display: flex; flex-direction: column; align-self: stretch; }
.big { flex-direction: column; justify-content: flex-start; align-self: stretch; width: 40px; padding-top: 6px; line-height: 12px; }
.bi { width: 32px; height: 32px; margin-bottom: 8px; }
.big .caret { margin-top: 4px; }
.glabel { height: 22px; gap: 6px; border-top: 1px solid var(--line); background: var(--bar); white-space: nowrap; }
.glabel .caret { border-width: 5px 3px 0; }

/* Work area */
.work { flex: 1; display: flex; align-items: flex-start; padding-left: 4px; }
.side { width: 152px; flex: none; margin-top: 15px; }
.sidetabs { display: flex; margin-bottom: -1px; }
.stab { width: 30px; height: 29px; border: 1px solid var(--line); border-left-width: 0; background: var(--bar); }
.stab.on { border-left-width: 1px; background: var(--paper); border-bottom-color: var(--paper); position: relative; }
.mi { width: 19px; height: 19px; }
.panel { border: solid var(--frame); border-width: 1px 3px 3px 2px; }
.phead { display: flex; align-items: center; justify-content: flex-end; height: 28px; }
.phead h2 { margin-right: 8px; font-size: 13px; }
.pb { width: 24px; height: 24px; }
.pb ~ .pb { margin-left: 3px; }
.pi { width: 20px; height: 20px; }

.treebox { display: grid; grid-template-columns: minmax(0, 1fr) 18px; border: 1px solid var(--line); border-width: 1px 0 0 1px; }
.tree { overflow: hidden; }
.tree li { display: flex; align-items: center; height: 16px; padding-left: 21px; white-space: nowrap; }
.tree .root { padding-left: 1px; }
.ti { width: 16px; height: 16px; margin-right: 3px; }
.sub::before { content: ""; width: 0; height: 0; margin: 0 7px 0 -14px; border: solid transparent; border-width: 4px 0 4px 7px; border-left-color: #8b8b8e; }
.mk .ti { margin-right: 9px; }
.mk { background: linear-gradient(#3c3c40, #3c3c40) 41px 4px / 4px 4px no-repeat; }

.vscroll, .hscroll { display: flex; background: #f0f0f1; }
.vscroll { flex-direction: column; border-left: 1px solid var(--soft); }
.sb { width: 17px; height: 16px; flex: none; border: 1px solid #d5d6d8; background: #f6f6f7; color: #555; }
.vthumb, .hthumb { display: flex; align-items: center; justify-content: center; border: 1px solid #c3c4c7; background: linear-gradient(90deg, #fcfcfc, #e4e5e7); }
.vthumb { flex: 208; margin-top: 1px; }
.vscroll .gap { flex: 47; }
.hthumb { flex: 88; background: linear-gradient(#fcfcfc, #e4e5e7); }
.hscroll .gap { flex: 8; }
.grip { width: 8px; height: 11px; background: repeating-linear-gradient(#a9aaad 0 1px, transparent 1px 3px); }
.hthumb .grip { width: 11px; height: 8px; background: repeating-linear-gradient(90deg, #a9aaad 0 1px, transparent 1px 3px); }
.corner { background: var(--paper); }

/* View toolbar */
.viewbar { flex: none; width: 28px; margin: 55px 0 0 6px; padding: 5px 0 6px; border: 1px solid var(--line); background: var(--bar); }
.vb { position: relative; width: 26px; height: 27px; border-top: 1px solid var(--line); background: var(--paper); }
.vb:last-child { border-bottom: 1px solid var(--line); }
.vb.on { background: #dcdee1; border: 1px solid #aaacb0; }
.vi { width: 18px; height: 18px; }
.fly::after { content: ""; position: absolute; right: 2px; bottom: 2px; border: solid transparent; border-width: 0 0 4px 4px; border-bottom-color: #555; }
.ab { font: bold 8px "Liberation Sans", sans-serif; fill: #222; }

.viewport { flex: 1; min-width: 0; padding: 45px 0 0 86px; }
.model { width: 254px; max-width: 100%; }

/* Status bar */
.status { position: relative; display: flex; align-items: center; height: 33px; padding: 0 18px 0 6px; border-top: 2px solid #98999b; background: #eff0f1; }
.toggles { display: flex; gap: 4px; }
.tg { width: 24px; height: 22px; border: 1px solid #cccdd0; }
.msg { position: relative; margin-left: 22px; white-space: nowrap; }
.msg::before { content: ""; position: absolute; left: -9px; top: 6px; width: 6px; height: 6px; border-radius: 3px; background: #1421a8; }
.vsep.push { margin: 0 34px 0 auto; }
.vsep.after { margin: 0 97px 0 2px; }
.lights { display: flex; align-items: center; gap: 2px; height: 24px; margin-right: 4px; padding: 0 1px 0 3px; border: solid #d3d4d7; border-width: 0 1px; }
.lights i { width: 6px; height: 6px; border-radius: 3px; background: #c7c8cb; }
.lights .ok { width: 11px; height: 11px; border-radius: 6px; background: #46cf4a; }
.find { width: 40px; height: 22px; border: 1px solid #b9babd; border-radius: 3px; background: linear-gradient(#fdfdfd, #e6e7e9); }
.find svg { width: 18px; height: 16px; }
.filter { position: relative; display: flex; align-items: center; width: 24%; height: 19px; }
.filter select { appearance: none; width: 100%; height: 19px; padding: 0 20px 0 5px; border: 1px solid #bfc0c3; border-radius: 0; color: inherit; font: inherit; background: linear-gradient(90deg, #bfc0c3 1px, #f2f2f3 1px) right / 15px 100% no-repeat, linear-gradient(#fff, #f3f3f4); }
.filter .caret { position: absolute; right: 4px; top: 7px; border-width: 5px 4px 0; pointer-events: none; }

.brand { position: absolute; left: 3px; bottom: 1px; width: 120px; height: 48px; }
.word { font: italic 36px "Liberation Sans", sans-serif; fill: url(#g-logo); stroke: #1784bd; stroke-width: 1px; filter: drop-shadow(1px 1px 0 #123c58); }
.url { font: italic bold 9px "DejaVu Sans", sans-serif; fill: #fff; text-anchor: middle; }
```
